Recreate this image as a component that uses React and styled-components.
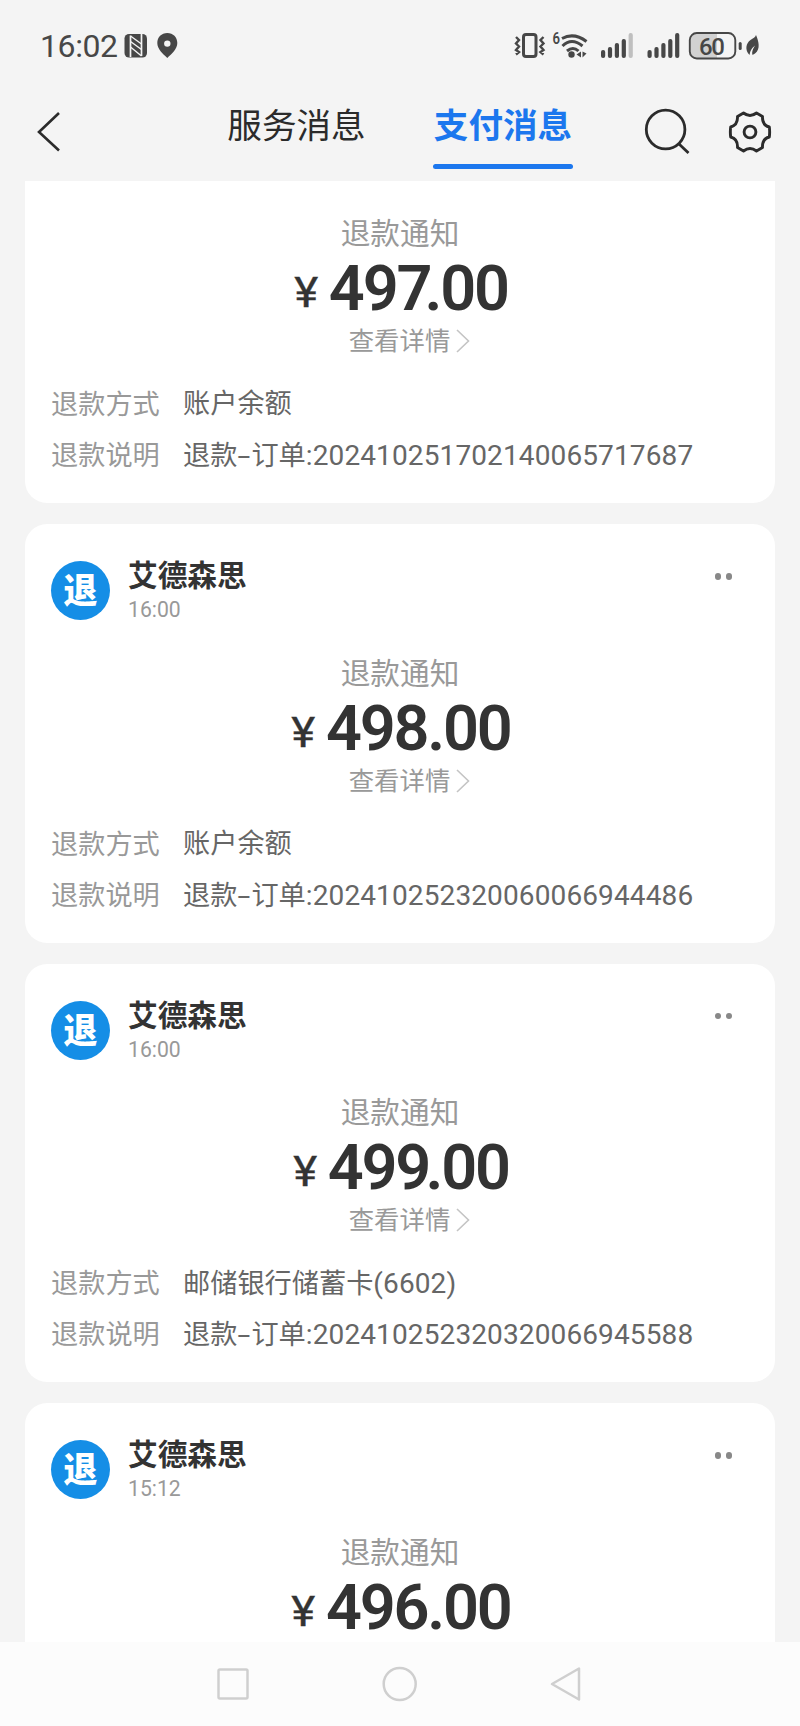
import React from "react";
import styled, { createGlobalStyle } from "styled-components";

const Global = createGlobalStyle`
  * { box-sizing: border-box; }
  body { margin: 0; background: #f4f4f4; font-family: Roboto, "Noto Sans CJK SC", sans-serif; color: #333; }
`;
const Screen = styled.div`
  width: 800px; height: 1726px; display: flex; flex-direction: column; overflow: hidden; background: #f4f4f4;
`;
const StatusBar = styled.div`
  height: 92px; flex: none; display: flex; align-items: center; padding: 0 39px 0 40px; color: #474747;
`;
const Clock = styled.span`
  font-size: 32px; line-height: 40px; width: 84px; letter-spacing: -0.4px;
`;
const StatusIcons = styled.svg`
  display: block; flex: none; margin-left: ${(p) => p.$left || "0"};
`;
const NavBar = styled.div`
  height: 89px; flex: none; display: flex; align-items: flex-start; padding: 0 28px 0 36px; color: #2b2b2b;
`;
const IconSlot = styled.button`
  border: 0; background: none; padding: 0; color: inherit; display: block; width: ${(p) => p.$w}px; margin: ${(p) => p.$m};
  svg { display: block; }
`;
const Tab = styled.div`
  width: 140px; height: 77px; margin-left: ${(p) => p.$left}px; text-align: center; white-space: nowrap;
  font-size: 34.6px; line-height: ${(p) => (p.$active ? 69 : 68)}px; font-weight: ${(p) => (p.$active ? 700 : 400)};
  color: ${(p) => (p.$active ? "#1c77ee" : "#2b2b2b")};
  display: flex; flex-direction: column; justify-content: space-between;
`;
const Underline = styled.i`
  height: 5px; border-radius: 3px; background: #1c77ee;
`;
const List = styled.main`
  flex: 1; min-height: 0; overflow: hidden; padding: 0 25px; display: flex; flex-direction: column; gap: 21px;
`;
const Card = styled.article`
  flex: ${(p) => (p.$last ? "1" : "none")}; background: #fff;
  border-radius: ${(p) => (p.$cut ? "0 0 22px 22px" : p.$last ? "22px 22px 0 0" : "22px")};
  padding: ${(p) => (p.$cut ? "33px" : "0")} 26px ${(p) => (p.$last ? "0" : "22px")};
`;
const CardHead = styled.header`
  height: 129.5px; display: flex; padding-top: 37px;
`;
const Avatar = styled.div`
  width: 59px; height: 59px; border-radius: 50%; background: #158ee6; color: #fff; font-size: 34px; font-weight: 900;
  line-height: 60px; text-align: center;
`;
const Sender = styled.div`
  margin-left: 18px; flex: 1;
`;
const Name = styled.div`
  font-size: 29.7px; font-weight: 700; line-height: 36px; margin-top: -3px;
`;
const Time = styled.div`
  font-size: 21.2px; line-height: 30px; color: #999; margin-top: 1px;
`;
const More = styled.div`
  display: flex; gap: 4.5px; padding: 12px 17px 0 0;
  i { width: 6.5px; height: 6.5px; border-radius: 50%; background: #888; }
`;
const Notice = styled.div`
  height: 40px; line-height: 40px; font-size: 29.7px; color: #999; text-align: center;
`;
const Amount = styled.div`
  height: 68px; display: flex; justify-content: center; align-items: center; color: #333; padding-left: 3px;
`;
const Yen = styled.span`
  font-size: 43px; font-weight: 400; line-height: 66px; margin: 8px 11px 0 0; transform: scaleX(1.06); -webkit-text-stroke: 0.4px #333;
`;
const Figure = styled.span`
  font-size: 63px; font-weight: 600; line-height: 68px; letter-spacing: -2.2px; padding-top: 2px;
`;
const Kern = styled.span`
  letter-spacing: ${(p) => p.$by}px;
`;
const Detail = styled.div`
  height: 38px; display: flex; justify-content: center; align-items: center; gap: 6px;
  font-size: 25.4px; line-height: 38px; color: #999; padding-left: 19px;
`;
const Rows = styled.dl`
  margin: 19px 0 0; display: grid; grid-template-columns: 132px 1fr; grid-auto-rows: 51px; line-height: 51px;
  font-size: 27.2px; white-space: nowrap;
  dt { color: #999; padding-top: 1px; line-height: 50px; }
  dd { margin: 0; color: #666; }
`;
const Dash = styled.span`
  display: inline-block; width: 14px; text-align: center; transform: scaleX(1.7);
`;
const Digits = styled.span`
  font-size: 28px; letter-spacing: 0.12px;
`;
const SystemNav = styled.nav`
  height: 84px; flex: none; background: #fcfcfc; display: flex; justify-content: center; gap: 131px; padding-top: 24px;
  svg { display: block; }
`;

const messages = [
  { amount: "497.00", kern: -8, method: "账户余额", order: "202410251702140065717687", cut: true },
  { time: "16:00", amount: "498.00", kern: -2.2, method: "账户余额", order: "202410252320060066944486" },
  { time: "16:00", amount: "499.00", kern: -5.7, method: "邮储银行储蓄卡", card: "(6602)", order: "202410252320320066945588" },
  { time: "15:12", amount: "496.00", kern: -2.2 },
];

function Bars({ x, weak }) {
  return [8, 11, 15, 19, 25].map((h, i) => (
    <rect key={i} x={x + i * 6.9} y={58 - h} width="4.2" height={h} rx="2" opacity={weak && i === 4 ? 0.3 : 1} />
  ));
}

function Message({ m }) {
  return (
    <Card $cut={m.cut} $last={!m.order}>
      {!m.cut && (
        <CardHead>
          <Avatar>退</Avatar>
          <Sender>
            <Name>艾德森思</Name>
            <Time>{m.time}</Time>
          </Sender>
          <More><i /><i /></More>
        </CardHead>
      )}
      <Notice>退款通知</Notice>
      <Amount>
        <Yen>¥</Yen>
        <Figure>{m.amount.slice(0, 2)}<Kern $by={m.kern}>{m.amount[2]}</Kern>{m.amount.slice(3)}</Figure>
      </Amount>
      {m.order && (
        <>
          <Detail>
            查看详情
            <svg width="14" height="24" viewBox="0 0 14 24" fill="none" stroke="#c4c4c4" strokeWidth="1.6"><path d="M1 1l11.500 11L1 23" /></svg>
          </Detail>
          <Rows>
            <dt>退款方式</dt>
            <dd>{m.method}{m.card && <Digits>{m.card}</Digits>}</dd>
            <dt>退款说明</dt>
            <dd>退款<Dash>-</Dash>订单<Digits>:{m.order}</Digits></dd>
          </Rows>
        </>
      )}
    </Card>
  );
}

export default function App() {
  return (
    <Screen>
      <Global />
      <StatusBar>
        <Clock>16:02</Clock>
        <StatusIcons width="54" height="26" viewBox="124 33 54 26" fill="#474747">
          <rect x="124.500" y="34" width="22.500" height="23.500" rx="4.500" />
          <path d="M130.500 57V35.500M141.500 34v22" fill="none" stroke="#f4f4f4" strokeWidth="1.700" />
          <path d="M130.500 36l11 8M130.500 41.500l11 8M130.500 47l11 9" stroke="#f4f4f4" strokeWidth="1.400" />
          <path fillRule="evenodd" d="M167.300 33c-5.800 0-10 4.300-10 10 0 6.300 5.500 10.500 10 15 4.500-4.500 10-8.700 10-15 0-5.700-4.200-10-10-10zm0 7.400a3.200 3.200 0 1 1 0 6.400 3.200 3.200 0 0 1 0-6.400z" />
        </StatusIcons>
        <StatusIcons $left="auto" width="248" height="30" viewBox="513 31 248 30" fill="#474747">
          <rect x="523.500" y="34.500" width="12.500" height="22" rx="2.500" fill="none" stroke="#474747" strokeWidth="3" />
          <path d="M516 37l3 3-3 3.500 3 3-3 3.500 3 2-3 2.500M543.500 37l-3 3 3 3.500-3 3 3 3.500-3 2 3 2.500" fill="none" stroke="#474747" strokeWidth="2.400" />
          <text x="552.500" y="44" fontSize="16" fontWeight="600" textLength="7.500" lengthAdjust="spacingAndGlyphs">6</text>
          <path d="M562 38.500q12-6.500 24.500 3M562.500 46q9-9 20 0M567 51q6-5 11.500 0" fill="none" stroke="#474747" strokeWidth="3" />
          <circle cx="571.500" cy="54.500" r="3.200" />
          <path d="M581 51.500v6l-4.500-3zM582.500 51.500v6l4-4z" />
          <Bars x={601} weak />
          <Bars x={647.5} />
          <path d="M692 33.500h25v25h-20a7 7 0 0 1-6.500-7V40z" opacity="0.2" />
          <rect x="689.800" y="33" width="45.500" height="25.500" rx="7" fill="none" stroke="#474747" strokeWidth="1.900" />
          <text x="699" y="54.500" fontSize="24" fontWeight="500" textLength="26">60</text>
          <rect x="738.700" y="42" width="3" height="8" rx="1.500" />
          <path d="M756 35c2.500 6 5 14-1 18.500l-2.500 1.500q-1.500-3 2.500-9.500-5 4-5.500 9.500c-5-5-3.500-12 1-15 2.500-1.500 5-3 5.500-5z" />
        </StatusIcons>
      </StatusBar>
      <NavBar>
        <IconSlot $w={24} $m="20px 0 0">
          <svg width="24" height="40" viewBox="0 0 24 40" fill="none" stroke="currentColor" strokeWidth="2.600"><path d="M23 1L3 20l20 18.500" /></svg>
        </IconSlot>
        <Tab $left={166.5}>服务消息</Tab>
        <Tab $left={66.5} $active>支付消息<Underline /></Tab>
        <IconSlot $w={46} $m="16px 0 0 71px">
          <svg width="46" height="48" viewBox="0 0 46 48" fill="none" stroke="currentColor" strokeWidth="2.800"><circle cx="21.600" cy="21.500" r="19.300" /><path d="M34.500 35.500l10 9.500" /></svg>
        </IconSlot>
        <IconSlot $w={44} $m="18px 0 0 auto">
          <svg width="44" height="44" viewBox="-22 -22 44 44" fill="none" stroke="currentColor" strokeWidth="2.900" strokeLinejoin="round">
            <path d="M-6.500-19Q0-14 6.500-19L12.500-15.500Q12-7 19.300-5Q20 0 19.300 5Q12 7 12.500 15.500L6.500 19Q0 14-6.500 19L-12.500 15.500Q-12 7-19.300 5Q-20 0-19.300-5Q-12-7-12.500-15.500Z" />
            <circle r="5.900" />
          </svg>
        </IconSlot>
      </NavBar>
      <List>
        {messages.map((m, i) => <Message key={i} m={m} />)}
      </List>
      <SystemNav>
        <svg width="36" height="36" viewBox="0 0 36 36" fill="none" stroke="#cfcfcf" strokeWidth="2.500"><rect x="3.500" y="3.500" width="29" height="29" rx="1.500" /></svg>
        <svg width="36" height="36" viewBox="0 0 36 36" fill="none" stroke="#cfcfcf" strokeWidth="2.500"><circle cx="17.700" cy="18" r="16" /></svg>
        <svg width="36" height="36" viewBox="0 0 36 36" fill="none" stroke="#cfcfcf" strokeWidth="2.500" strokeLinejoin="round"><path d="M30 2.500v31L3 18z" /></svg>
      </SystemNav>
    </Screen>
  );
}
